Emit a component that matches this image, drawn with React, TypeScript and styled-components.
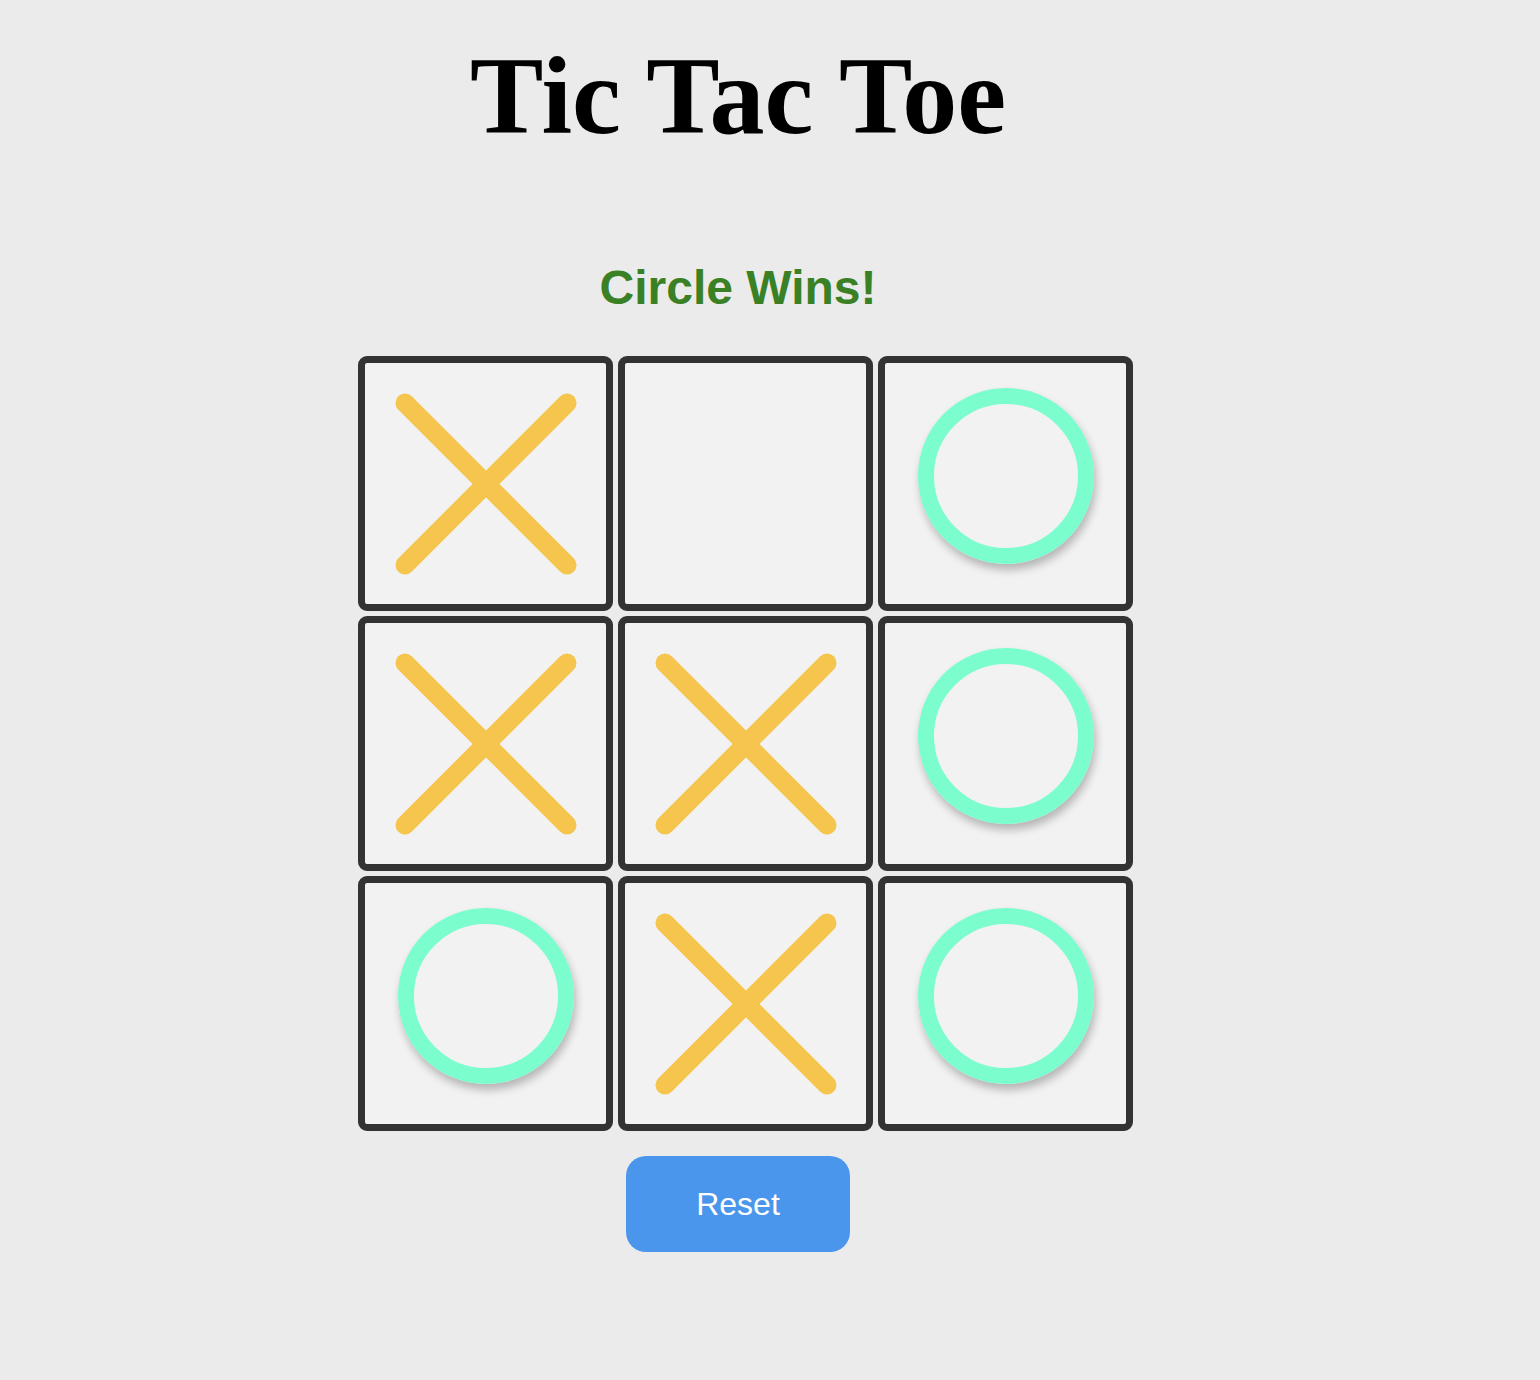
import React, { useState } from 'react';
import styled, { createGlobalStyle } from 'styled-components';

type Mark = 'x' | 'o' | null;

const startBoard: Mark[] = ['x', null, 'o', 'x', 'x', 'o', 'o', 'x', 'o'];

const GlobalStyle = createGlobalStyle`
  html, body {
    margin: 0;
    padding: 0;
    background: #ebebeb;
  }
`;

const Page = styled.div`
  width: 1476px;
  min-height: 1380px;
  padding-top: 33px;
  box-sizing: border-box;
  display: flex;
  flex-direction: column;
  align-items: center;
`;

const Title = styled.h1`
  margin: 0;
  font-family: 'Liberation Serif', 'Times New Roman', serif;
  font-weight: 700;
  font-size: 110px;
  line-height: 127px;
  color: #000;
`;

const Status = styled.div`
  margin-top: 100px;
  font-family: 'Liberation Sans', Arial, sans-serif;
  font-weight: 700;
  font-size: 48px;
  line-height: 56px;
  color: #3a8024;
`;

const BoardWrap = styled.div`
  margin-top: 40px;
  padding-left: 15px;
`;

const Board = styled.div`
  display: grid;
  grid-template-columns: repeat(3, 255px);
  grid-auto-rows: 255px;
  gap: 5px;
`;

const Cell = styled.div`
  box-sizing: border-box;
  border: 7.5px solid #333;
  border-radius: 9px;
  background: #f2f2f2;
  display: flex;
  align-items: center;
  justify-content: center;
  cursor: pointer;
`;

const Cross = styled.svg`
  width: 182px;
  height: 182px;
  filter: blur(0.6px);
`;

const Ring = styled.div`
  box-sizing: border-box;
  width: 176px;
  height: 176px;
  margin-bottom: 15px;
  border: 16px solid #7bfdce;
  border-radius: 50%;
  box-shadow: 2px 6px 8px rgba(0, 0, 0, 0.25);
`;

const ResetButton = styled.button`
  margin-top: 25px;
  width: 224px;
  height: 96px;
  border: none;
  border-radius: 20px;
  background: #4a96ec;
  color: #fff;
  font-family: 'Liberation Sans', Arial, sans-serif;
  font-size: 32px;
  cursor: pointer;
`;

function CrossMark() {
  return (
    <Cross viewBox="0 0 182 182">
      <g stroke="#f6c54e" strokeWidth="19" strokeLinecap="round">
        <line x1="10" y1="10" x2="172" y2="172" />
        <line x1="172" y1="10" x2="10" y2="172" />
      </g>
    </Cross>
  );
}

export default function App() {
  const [board, setBoard] = useState<Mark[]>(startBoard);

  return (
    <Page>
      <GlobalStyle />
      <Title>Tic Tac Toe</Title>
      <Status>Circle Wins!</Status>
      <BoardWrap>
        <Board>
          {board.map((mark, i) => (
            <Cell key={i}>
              {mark === 'x' ? <CrossMark /> : mark === 'o' ? <Ring /> : null}
            </Cell>
          ))}
        </Board>
      </BoardWrap>
      <ResetButton onClick={() => setBoard(Array(9).fill(null))}>Reset</ResetButton>
    </Page>
  );
}
